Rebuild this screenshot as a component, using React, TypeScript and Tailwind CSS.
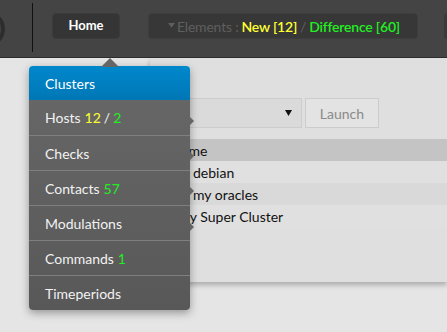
import React from "react";

function MenuRow({ children, first }: { children: React.ReactNode; first?: boolean }) {
  return (
    <div className={`relative h-[35px] flex items-center pl-[16px] text-[14px] text-[#f2f2f2] ${first ? "" : "border-t border-[#7f7f7f]"}`}>
      {children}
    </div>
  );
}

export default function App() {
  return (
    <div
      className="relative w-[447px] h-[332px] overflow-hidden bg-[#e5e5e5]"
      style={{ fontFamily: "Lato, 'Open Sans', sans-serif" }}
    >
      {/* Top bar */}
      <div className="relative flex items-center h-[58px] bg-[#444444] border-b border-[#2c2c2c]">
        <div className="shrink-0 ml-[-31px] w-[36px] h-[36px] rounded-full border-[4px] border-[#2d2d2d] bg-[#444]" />
        <div className="shrink-0 ml-[27px] w-px h-[49px] bg-[#111] self-start mt-[3px]" />
        <div className="shrink-0 ml-[19px] h-[26px] w-[68px] rounded-[4px] bg-[#353535] border border-[#3b3b3b] flex items-center justify-center text-white font-bold text-[13px] mt-[-5px]">
          Home
        </div>
        <div className="shrink-0 ml-[28px] h-[26px] w-[270px] rounded-[4px] bg-[#373737] border border-[#3d3d3d] flex items-center pl-[19px] text-[14px] mt-[-5px] whitespace-nowrap tracking-[-0.2px]">
          <svg width="7" height="5" viewBox="0 0 7 5" className="mr-[2px] mt-[-2px]">
            <polygon points="0,0 7,0 3.5,4.5" fill="#5f5f5f" />
          </svg>
          <span className="text-[#5f5f5f]">Elements :</span>
          <span className="ml-[3px] text-[#ffff33] font-semibold">New [12]</span>
          <span className="mx-[3px] text-[#5f5f5f]">/</span>
          <span className="text-[#22ee22] font-semibold">Difference [60]</span>
        </div>
        <div className="shrink-0 ml-[26px] h-[26px] w-[20px] rounded-[4px] bg-[#3a3a3a] mt-[-5px]" />
      </div>

      {/* Content panel */}
      <div className="ml-[150px] h-[224px] bg-[#dfdfdf] shadow-[0_3px_5px_rgba(0,0,0,0.25)] pt-[40px]">
        <div className="flex items-center">
          <div className="ml-[10px] w-[142px] h-[30px] bg-[#dadada] border border-[#cdcdcd] flex items-center justify-end pr-[9px]">
            <svg width="7" height="6" viewBox="0 0 7 6">
              <polygon points="0,0 7,0 3.5,6" fill="#111" />
            </svg>
          </div>
          <div className="ml-[3px] w-[74px] h-[30px] bg-[#e3e3e3] border border-[#cccccc] flex items-center justify-center text-[14px] text-[#8a8a8a]">
            Launch
          </div>
        </div>
        <div className="mt-[11px] text-[14px] text-[#111]">
          <div className="h-[22px] bg-[#c4c4c4] flex items-center pl-[20px]">Home</div>
          <div className="h-[22px] bg-[#e0e0e0] flex items-center pl-[43px]">debian</div>
          <div className="h-[22px] bg-[#d9d9d9] flex items-center pl-[43px]">my oracles</div>
          <div className="h-[22px] bg-[#e0e0e0] flex items-center pl-[27px]">My Super Cluster</div>
        </div>
      </div>

      {/* Dropdown menu */}
      <div className="absolute left-[101px] top-[58px] w-0 h-0 border-l-[9px] border-r-[9px] border-b-[9px] border-l-transparent border-r-transparent border-b-[#666666] z-20" />
      <div className="absolute left-[29px] top-[66px] w-[161px] rounded-[4px] overflow-visible shadow-[0_3px_8px_rgba(0,0,0,0.35)] z-10">
        <div className="h-[34px] rounded-t-[4px] bg-gradient-to-b from-[#0088cc] to-[#0077b5] flex items-center pl-[16px] text-[14px] text-white">
          Clusters
        </div>
        <div className="rounded-b-[4px] bg-gradient-to-b from-[#666666] to-[#585858]">
          <MenuRow first>
            Hosts <span className="ml-[4px] text-[#ffff33]">12</span>
            <span className="mx-[3px]">/</span>
            <span className="text-[#22ee22]">2</span>
          </MenuRow>
          <MenuRow>Checks</MenuRow>
          <MenuRow>
            Contacts <span className="ml-[4px] text-[#22ee22]">57</span>
          </MenuRow>
          <MenuRow>Modulations</MenuRow>
          <MenuRow>
            Commands <span className="ml-[4px] text-[#22ee22]">1</span>
          </MenuRow>
          <MenuRow>Timeperiods</MenuRow>
        </div>
        {[51, 86, 121, 157].map((t) => (
          <div
            key={t}
            className="absolute right-[-4px] w-0 h-0 border-t-[4px] border-b-[4px] border-l-[4px] border-t-transparent border-b-transparent border-l-[#656565]"
            style={{ top: t }}
          />
        ))}
      </div>
    </div>
  );
}
